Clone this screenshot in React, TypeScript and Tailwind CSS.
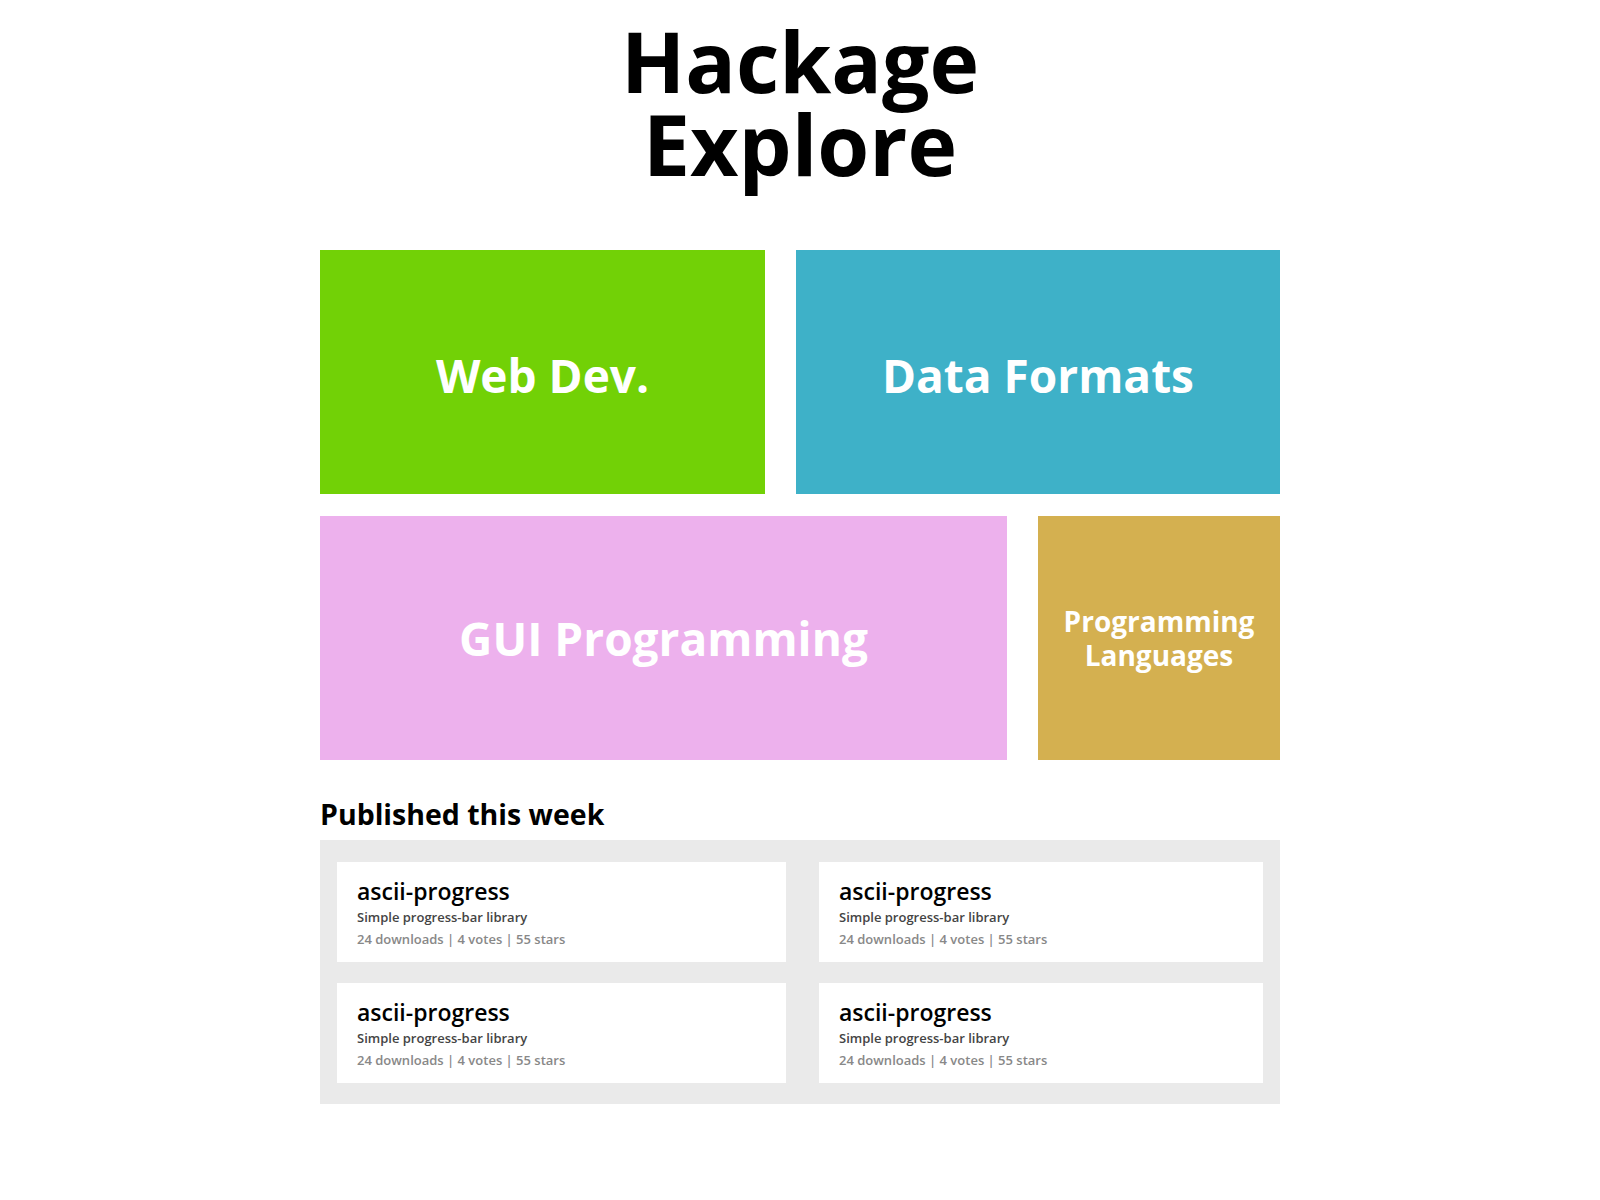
import React from "react";

const tiles = [
  { label: "Web Dev.", bg: "bg-[#72d106]", w: "w-[445px]" },
  { label: "Data Formats", bg: "bg-[#3eb1c8]", w: "w-[484px]" },
];

function Tile({ label, className }: { label: React.ReactNode; className: string }) {
  return (
    <div className={`flex h-[244px] items-center justify-center text-center text-white ${className}`}>
      {label}
    </div>
  );
}

function PackageCard() {
  return (
    <div className="h-[100px] bg-white px-5 pt-[14px]">
      <div className="text-[23px] leading-[30px] font-semibold text-black">ascii-progress</div>
      <div className="text-[13px] leading-[22px] font-semibold text-[#444]">Simple progress-bar library</div>
      <div className="text-[13px] leading-[22px] font-semibold text-[#888]">24 downloads | 4 votes | 55 stars</div>
    </div>
  );
}

export default function App() {
  return (
    <div className="min-h-screen bg-white pt-[19px] pb-24" style={{ fontFamily: "'Open Sans', Roboto, sans-serif" }}>
      <h1 className="text-center text-[84px] leading-[83px] font-bold text-black">
        Hackage
        <br />
        Explore
      </h1>

      <div className="mx-auto mt-[65px] w-[960px]">
        <div className="flex gap-[31px]">
          {tiles.map((t) => (
            <Tile key={t.label} className={`${t.bg} ${t.w} pt-[6px] text-[46px] font-bold`} label={t.label} />
          ))}
        </div>
        <div className="mt-[22px] flex gap-[31px]">
          <Tile className="w-[687px] bg-[#edb1ed] text-[46px] font-bold" label="GUI Programming" />
          <Tile
            className="w-[242px] bg-[#d4b050] text-[28px] leading-[34px] font-bold"
            label={
              <span>
                Programming
                <br />
                Languages
              </span>
            }
          />
        </div>

        <h2 className="mt-[36px] text-[28.5px] leading-[36px] font-bold text-black">Published this week</h2>
        <div className="mt-2 grid grid-cols-[449px_444px] gap-x-[33px] gap-y-[21px] bg-[#eaeaea] px-[17px] pt-[22px] pb-[21px]">
          <PackageCard />
          <PackageCard />
          <PackageCard />
          <PackageCard />
        </div>
      </div>
    </div>
  );
}
